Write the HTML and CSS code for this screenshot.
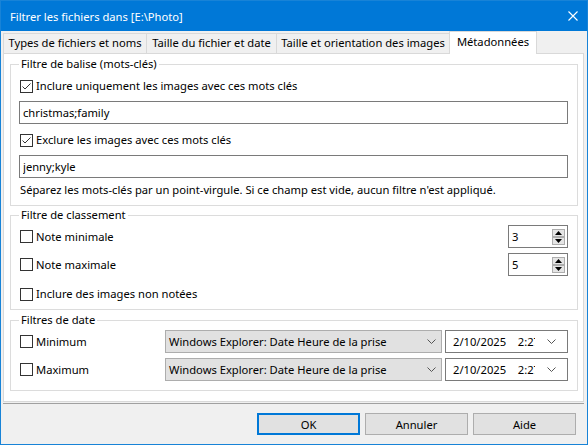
FILE: index.html
```html
<!DOCTYPE html>
<html lang="fr">
<head>
    <meta charset="UTF-8">
    <title>Filtrer les fichiers</title>
    <link rel="stylesheet" href="styles.css">
</head>
<body>

    <div class="window">
        <!-- Title bar -->
        <div class="titlebar">
            <span>Filtrer les fichiers dans [E:\Photo]</span>
            <svg class="close" width="10" height="10" viewBox="0 0 10 10">
                <path d="M0.5 0.5 L9.5 9.5 M9.5 0.5 L0.5 9.5" stroke="#fff" stroke-width="1.1" fill="none"/>
            </svg>
        </div>

        <div class="body">
            <!-- Tabs -->
            <div class="tabs">
                <div class="tab t1">Types de fichiers et noms</div>
                <div class="tab t2">Taille du fichier et date</div>
                <div class="tab t3">Taille et orientation des images</div>
                <div class="tab t4 active">Métadonnées</div>
            </div>

            <div class="panel">
                <!-- Keyword filter -->
                <fieldset class="group g-tags">
                    <legend>Filtre de balise (mots-clés)</legend>
                    <div class="check-row first">
                        <span class="box checked"><svg width="11" height="11" viewBox="0 0 11 11"><path d="M1.5 5.5 L4 8 L9.5 2.5" stroke="#333" stroke-width="1" fill="none"/></svg></span>
                        <span>Inclure uniquement les images avec ces mots clés</span>
                    </div>
                    <input class="field" type="text" value="christmas;family">
                    <div class="check-row second">
                        <span class="box checked"><svg width="11" height="11" viewBox="0 0 11 11"><path d="M1.5 5.5 L4 8 L9.5 2.5" stroke="#333" stroke-width="1" fill="none"/></svg></span>
                        <span>Exclure les images avec ces mots clés</span>
                    </div>
                    <input class="field" type="text" value="jenny;kyle">
                    <div class="hint">Séparez les mots-clés par un point-virgule. Si ce champ est vide, aucun filtre n'est appliqué.</div>
                </fieldset>

                <!-- Rating filter -->
                <fieldset class="group g-rate">
                    <legend>Filtre de classement</legend>
                    <div class="rate-row first">
                        <div class="check-row"><span class="box"></span><span>Note minimale</span></div>
                        <div class="spin">
                            <span>3</span>
                            <div class="spin-btns">
                                <div class="spin-btn"><svg width="7" height="4" viewBox="0 0 7 4"><path d="M3.5 0 L7 4 L0 4 Z" fill="#000"/></svg></div>
                                <div class="spin-btn"><svg width="7" height="4" viewBox="0 0 7 4"><path d="M0 0 L7 0 L3.5 4 Z" fill="#000"/></svg></div>
                            </div>
                        </div>
                    </div>
                    <div class="rate-row">
                        <div class="check-row"><span class="box"></span><span>Note maximale</span></div>
                        <div class="spin">
                            <span>5</span>
                            <div class="spin-btns">
                                <div class="spin-btn"><svg width="7" height="4" viewBox="0 0 7 4"><path d="M3.5 0 L7 4 L0 4 Z" fill="#000"/></svg></div>
                                <div class="spin-btn"><svg width="7" height="4" viewBox="0 0 7 4"><path d="M0 0 L7 0 L3.5 4 Z" fill="#000"/></svg></div>
                            </div>
                        </div>
                    </div>
                    <div class="check-row unrated"><span class="box"></span><span>Inclure des images non notées</span></div>
                </fieldset>

                <!-- Date filter -->
                <fieldset class="group g-date">
                    <legend>Filtres de date</legend>
                    <div class="date-row first">
                        <div class="check-row"><span class="box"></span><span>Minimum</span></div>
                        <div class="combo">
                            <span>Windows Explorer: Date Heure de la prise</span>
                            <svg width="9" height="5" viewBox="0 0 9 5"><path d="M0.5 0.5 L4.5 4.5 L8.5 0.5" stroke="#555" fill="none"/></svg>
                        </div>
                        <div class="datebox">
                            <span class="dt">2/10/2025&nbsp;&nbsp;&nbsp;&nbsp;2:27</span>
                            <svg width="9" height="5" viewBox="0 0 9 5"><path d="M0.5 0.5 L4.5 4.5 L8.5 0.5" stroke="#555" fill="none"/></svg>
                        </div>
                    </div>
                    <div class="date-row">
                        <div class="check-row"><span class="box"></span><span>Maximum</span></div>
                        <div class="combo">
                            <span>Windows Explorer: Date Heure de la prise</span>
                            <svg width="9" height="5" viewBox="0 0 9 5"><path d="M0.5 0.5 L4.5 4.5 L8.5 0.5" stroke="#555" fill="none"/></svg>
                        </div>
                        <div class="datebox">
                            <span class="dt">2/10/2025&nbsp;&nbsp;&nbsp;&nbsp;2:27</span>
                            <svg width="9" height="5" viewBox="0 0 9 5"><path d="M0.5 0.5 L4.5 4.5 L8.5 0.5" stroke="#555" fill="none"/></svg>
                        </div>
                    </div>
                </fieldset>
            </div>

            <!-- Dialog buttons -->
            <div class="buttons">
                <button class="btn default">OK</button>
                <button class="btn">Annuler</button>
                <button class="btn">Aide</button>
            </div>
        </div>
    </div>

</body>
</html>
```

FILE: styles.css
```css
* {
    box-sizing: border-box;
}
body {
    margin: 0;
    font-family: "Noto Sans", sans-serif;
    font-size: 11.2px;
    color: #000;
}

/* Window frame */
.window {
    width: 588px;
    height: 445px;
    border: 1px solid #1883d7;
    background-color: #f0f0f0;
    display: flex;
    flex-direction: column;
}
.titlebar {
    height: 30px;
    flex: none;
    background-color: #0078d7;
    color: white;
    display: flex;
    align-items: center;
    justify-content: space-between;
    padding: 0 9px 0 9px;
}
.body {
    flex: 1;
    display: flex;
    flex-direction: column;
    padding: 0 3px 0 2px;
}

/* Tabs */
.tabs {
    height: 22px;
    flex: none;
    display: flex;
    align-items: flex-end;
}
.tab {
    height: 20px;
    border: 1px solid #d9d9d9;
    border-bottom: none;
    margin-right: -1px;
    line-height: 18px;
    text-align: center;
    white-space: nowrap;
    overflow: hidden;
}
.t1 { width: 144px; }
.t2 { width: 131px; }
.t3 { width: 174px; }
.t4 { width: 88px; }
.tab.active {
    height: 23px;
    margin-bottom: -1px;
    padding-top: 1px;
    background-color: white;
    position: relative;
    z-index: 1;
}

/* Tab page */
.panel {
    height: 349px;
    flex: none;
    background-color: white;
    border: 1px solid #d9d9d9;
    padding: 2px 5px 0 6px;
}
.group {
    margin: 0;
    min-width: 0;
    border: 1px solid #dcdcdc;
    padding: 0 9px 7px 9px;
}
.group legend {
    padding: 0 2px;
    margin-left: -1px;
    line-height: 16px;
}
.g-rate {
    margin-top: 1px;
}
.g-date {
    margin-top: 2px;
    padding-bottom: 9px;
}

/* Checkbox rows */
.check-row {
    display: flex;
    align-items: center;
    height: 16px;
    line-height: 16px;
    white-space: nowrap;
}
.check-row .box {
    width: 13px;
    height: 13px;
    border: 1px solid #333;
    background-color: white;
    margin-right: 3px;
    display: flex;
    align-items: center;
    justify-content: center;
}
.g-tags .check-row.first {
    margin-top: 6px;
}
.g-tags .check-row.second {
    margin-top: 8px;
}
.field {
    display: block;
    width: calc(100% + 1px);
    margin: 7px 0 0 -1px;
    height: 23px;
    border: 1px solid #7a7a7a;
    padding: 0 3px;
    font-family: inherit;
    font-size: 11.2px;
    color: #000;
    outline: none;
}
.hint {
    margin-top: 4px;
    line-height: 16px;
    white-space: nowrap;
}

/* Rating */
.rate-row {
    display: flex;
    align-items: center;
    justify-content: space-between;
    height: 23px;
    margin-top: 5px;
}
.rate-row.first {
    margin-top: 2px;
}
.unrated {
    margin-top: 10px;
}
.spin {
    width: 60px;
    height: 23px;
    border: 1px solid #7a7a7a;
    display: flex;
    align-items: center;
    justify-content: space-between;
    padding: 0 2px 0 3px;
}
.spin-btns {
    display: flex;
    flex-direction: column;
}
.spin-btn {
    width: 13px;
    height: 8px;
    border: 1px solid #adadad;
    background-color: #e5e5e5;
    display: flex;
    align-items: center;
    justify-content: center;
}

/* Dates */
.date-row {
    display: flex;
    align-items: center;
    height: 23px;
    margin-top: 5px;
}
.date-row.first {
    margin-top: 2px;
}
.date-row .check-row {
    flex: 1;
}
.combo {
    width: 277px;
    height: 23px;
    border: 1px solid #adadad;
    background-color: #e1e1e1;
    display: flex;
    align-items: center;
    justify-content: space-between;
    padding: 0 5px 0 3px;
    white-space: nowrap;
}
.datebox {
    width: 123px;
    height: 23px;
    margin-left: 3px;
    border: 1px solid #7a7a7a;
    display: flex;
    align-items: center;
    justify-content: space-between;
    padding: 0 11px 0 7px;
}
.datebox .dt {
    width: 82px;
    overflow: hidden;
    white-space: nowrap;
}

/* Bottom buttons */
.buttons {
    flex: 1;
    margin-top: 1px;
    border-top: 1px solid #a0a0a0;
    display: flex;
    justify-content: flex-end;
    align-items: flex-start;
    gap: 5px;
    padding: 9px 8px 0 0;
}
.btn {
    width: 103px;
    height: 22px;
    border: 1px solid #adadad;
    background-color: #e1e1e1;
    font-family: inherit;
    font-size: 11.2px;
    color: #000;
    padding: 0;
}
.btn.default {
    border: 2px solid #0078d7;
}
```
